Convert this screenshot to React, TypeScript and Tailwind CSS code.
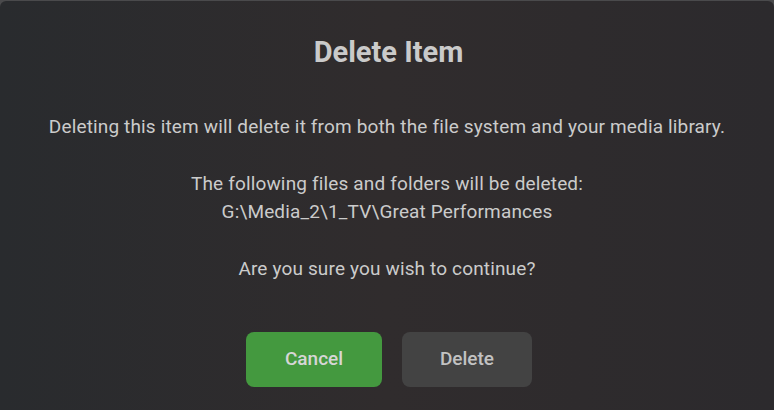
export default function App() {
  return (
    <div className="h-[410px] w-[774px] bg-[#4a4a4c] pt-px font-['Roboto',sans-serif]">
      {/* Dialog */}
      <div className="flex h-full flex-col items-center rounded-t-[6px] bg-gradient-to-r from-[#292b2e] via-[#302c2d] to-[#2c2a2d] text-[#cbcbcb]">
        <h1 className="mt-[34px] pl-[3px] text-[29px] leading-[34px] font-bold text-[#cacaca]">Delete Item</h1>

        <div className="mt-[44px] flex flex-col items-center gap-[29px] text-center text-[19px] leading-[28px] tracking-[0.15px]">
          <p>Deleting this item will delete it from both the file system and your media library.</p>
          <p>
            The following files and folders will be deleted:
            <br />
            G:\Media_2\1_TV\Great Performances
          </p>
          <p>Are you sure you wish to continue?</p>
        </div>

        {/* Buttons */}
        <div className="mt-[49px] flex gap-5 pl-[4px]">
          <button className="h-[55px] w-[136px] rounded-[8px] bg-[#44993f] text-[19px] font-medium text-[#d6d6d6]">
            Cancel
          </button>
          <button className="h-[55px] w-[130px] rounded-[8px] bg-[#434343] text-[19px] font-medium text-[#c2c2c2]">
            Delete
          </button>
        </div>
      </div>
    </div>
  );
}
